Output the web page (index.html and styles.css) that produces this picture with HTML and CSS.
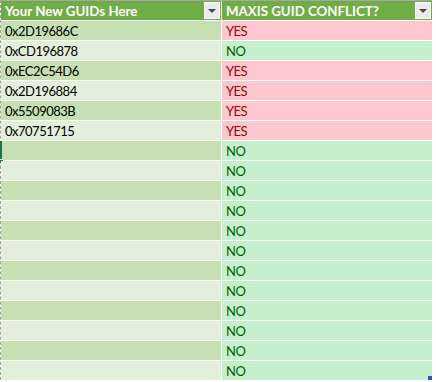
FILE: index.html
```html
<!DOCTYPE html>
<html>
<head>
<meta charset="utf-8">
<link rel="stylesheet" href="styles.css">
</head>
<body>
<div class="sheet">
  <div class="table">
    <div class="hcell"><span>Your New GUIDs Here</span><span class="dd"></span></div>
    <div class="hcell"><span>MAXIS GUID CONFLICT?</span><span class="dd"></span></div>

    <div class="cell odd">0x2D19686C</div><div class="cell yes">YES</div>
    <div class="cell even">0xCD196878</div><div class="cell no">NO</div>
    <div class="cell odd">0xEC2C54D6</div><div class="cell yes">YES</div>
    <div class="cell even">0x2D196884</div><div class="cell yes">YES</div>
    <div class="cell odd">0x5509083B</div><div class="cell yes">YES</div>
    <div class="cell even">0x70751715</div><div class="cell yes">YES</div>
    <div class="cell odd active"></div><div class="cell no">NO</div>
    <div class="cell even"></div><div class="cell no">NO</div>
    <div class="cell odd"></div><div class="cell no">NO</div>
    <div class="cell even"></div><div class="cell no">NO</div>
    <div class="cell odd"></div><div class="cell no">NO</div>
    <div class="cell even"></div><div class="cell no">NO</div>
    <div class="cell odd"></div><div class="cell no">NO</div>
    <div class="cell even"></div><div class="cell no">NO</div>
    <div class="cell odd"></div><div class="cell no">NO</div>
    <div class="cell even"></div><div class="cell no">NO</div>
    <div class="cell odd"></div><div class="cell no">NO</div>
    <div class="cell even"></div><div class="cell no last">NO</div>
  </div>
</div>
</body>
</html>
```
FILE: styles.css
```css
html, body {
  margin: 0;
  padding: 0;
  background: #ffffff;
}
.sheet {
  width: 436px;
  height: 382px;
  overflow: hidden;
  font-family: Lato, "Liberation Sans", sans-serif;
  font-size: 13px;
  background: #ffffff;
}
.table {
  display: grid;
  grid-template-columns: 220px 210px;
  grid-auto-rows: 19px;
  column-gap: 1px;
  row-gap: 1px;
  width: 431px;
  border-top: 1px solid #a6a6a6;
  border-left: 1px dashed #a0a0a0;
  background: #ffffff;
}
.hcell {
  display: flex;
  align-items: center;
  justify-content: space-between;
  background: #70ad47;
  color: #ffffff;
  font-weight: 700;
  font-size: 13.3px;
  padding-left: 4px;
  padding-right: 1px;
}
.dd {
  width: 14px;
  height: 15px;
  background: #ebebeb;
  border: 1px solid #ffffff;
  display: flex;
  align-items: center;
  justify-content: center;
}
.dd::after {
  content: "";
  border-left: 4px solid transparent;
  border-right: 4px solid transparent;
  border-top: 4px solid #4a4a4a;
  margin-top: 1px;
}
.cell {
  position: relative;
  padding: 2px 0 0 4px;
  line-height: 17px;
  color: #000000;
  letter-spacing: -0.5px;
}
.odd { background: #c6e0b4; }
.even { background: #e2efda; }
.yes { background: #ffc7ce; color: #9c0006; }
.no { background: #c6efce; color: #006100; }
.active::before {
  content: "";
  position: absolute;
  left: -1px;
  top: 0;
  width: 2px;
  height: 19px;
  background: #217346;
}
.active::after {
  content: "";
  position: absolute;
  left: -1px;
  top: 18px;
  width: 3px;
  height: 3px;
  background: #217346;
  border: 1px solid #ffffff;
  border-left: none;
}
.last::after {
  content: "";
  position: absolute;
  right: 0;
  bottom: 0;
  width: 4px;
  height: 4px;
  background: #3a4fb8;
}
```
